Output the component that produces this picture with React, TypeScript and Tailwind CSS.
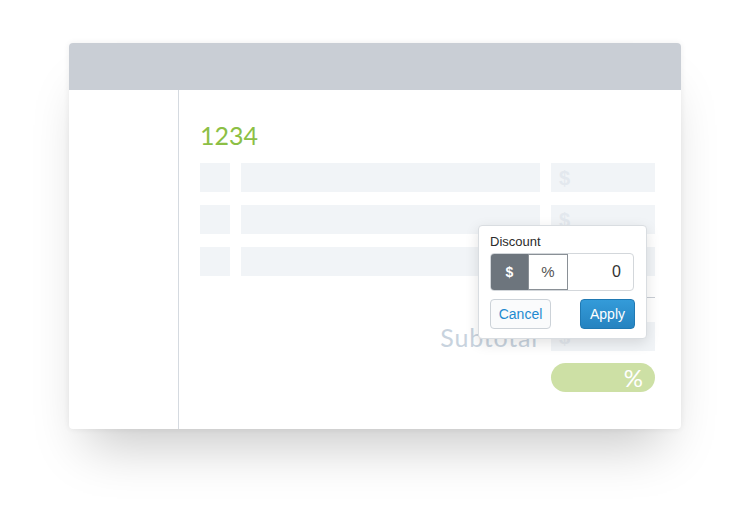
import React from 'react';

const rows = [0, 1, 2];

const App: React.FC = () => {
  return (
    <div className="w-[750px] h-[518px] bg-white pt-[43px] font-['Lato',sans-serif]">
      <div className="relative mx-auto w-[612px] rounded-[4px] bg-white shadow-[0_34px_50px_-18px_rgba(0,0,0,0.22),0_0_6px_rgba(0,0,0,0.07)]">
        <div className="h-[47px] rounded-t-[4px] bg-[#c9ced5]" />
        <div className="flex">
          <div className="w-[110px] shrink-0 border-r border-[#d5dae0]" />
          <div className="flex-1 pl-[21px] pr-[26px] pt-[31px] pb-[37px]">
            <div className="text-[25px] leading-[28px] text-[#8cbf45]">1234</div>
            <div className="mt-[14px] flex flex-col gap-[13px]">
              {rows.map((r) => (
                <div key={r} className="flex h-[29px] gap-[11px]">
                  <div className="w-[30px] bg-[#f1f4f7]" />
                  <div className="w-[299px] bg-[#f1f4f7]" />
                  <div className="flex w-[104px] items-center bg-[#f1f4f7] pl-[8px] font-['Liberation_Sans',sans-serif] text-[20px] font-bold text-[#e3e8ee]">
                    $
                  </div>
                </div>
              ))}
            </div>
            <div className="ml-[351px] mt-[21px] h-px w-[104px] bg-[#c9ced5]" />
            <div className="mt-[24px] flex h-[29px] items-center gap-[13px]">
              <div className="flex-1 text-right text-[25px] leading-[28px] tracking-[0.8px] text-[#c8d3de]">Subtotal</div>
              <div className="flex h-full w-[104px] items-center bg-[#f1f4f7] pl-[8px] font-['Liberation_Sans',sans-serif] text-[20px] font-bold text-[#e3e8ee]">
                $
              </div>
            </div>
            <div className="ml-[351px] mt-[12px] flex h-[29px] w-[104px] items-center justify-end rounded-full bg-[#cde0a5] pr-[12px] text-[24px] leading-none text-white">
              %
            </div>
          </div>
        </div>

        <div className="absolute left-[409px] top-[182px] w-[169px] rounded-[4px] border border-[#d9dde1] bg-white px-[11px] pt-[8px] pb-[9px] font-['Liberation_Sans',sans-serif] shadow-[0_4px_14px_rgba(0,0,0,0.12)]">
          <div className="text-[13px] leading-[16px] text-[#2b2b2b]">Discount</div>
          <div className="mt-[3px] flex h-[38px] w-[144px] rounded-[4px] border border-[#d3d7db]">
            <div className="flex w-[37px] items-center justify-center rounded-l-[3px] bg-[#6d757d] text-[14px] font-bold text-white">
              $
            </div>
            <div className="flex w-[40px] items-center justify-center border border-[#8a9096] bg-white text-[15px] text-[#555]">
              %
            </div>
            <div className="flex flex-1 items-center justify-end pr-[12px] text-[16px] text-[#333]">0</div>
          </div>
          <div className="mt-[8px] flex h-[30px] justify-between">
            <button className="w-[61px] rounded-[4px] border border-[#ccd2d8] bg-[#fafbfc] text-[14px] text-[#1f8ad0]">
              Cancel
            </button>
            <button className="w-[55px] rounded-[4px] border border-[#2079b3] bg-gradient-to-b from-[#349bd9] to-[#2683c0] text-[14px] text-white">
              Apply
            </button>
          </div>
        </div>
      </div>
    </div>
  );
};

export default App;
